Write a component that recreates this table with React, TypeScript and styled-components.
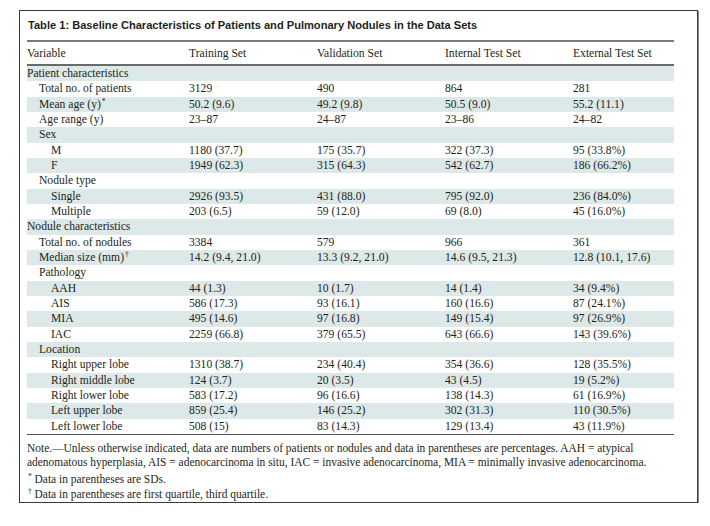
import styled, { createGlobalStyle } from "styled-components";

const GlobalStyle = createGlobalStyle`
  body {
    margin: 0;
    background: #ffffff;
  }
`;

type RowData = {
  label: string;
  sup?: string;
  level: number;
  values?: string[];
};

const rows: RowData[] = [
  { label: "Patient characteristics", level: 0 },
  { label: "Total no. of patients", level: 1, values: ["3129", "490", "864", "281"] },
  { label: "Mean age (y)", sup: "*", level: 1, values: ["50.2 (9.6)", "49.2 (9.8)", "50.5 (9.0)", "55.2 (11.1)"] },
  { label: "Age range (y)", level: 1, values: ["23–87", "24–87", "23–86", "24–82"] },
  { label: "Sex", level: 1 },
  { label: "M", level: 2, values: ["1180 (37.7)", "175 (35.7)", "322 (37.3)", "95 (33.8%)"] },
  { label: "F", level: 2, values: ["1949 (62.3)", "315 (64.3)", "542 (62.7)", "186 (66.2%)"] },
  { label: "Nodule type", level: 1 },
  { label: "Single", level: 2, values: ["2926 (93.5)", "431 (88.0)", "795 (92.0)", "236 (84.0%)"] },
  { label: "Multiple", level: 2, values: ["203 (6.5)", "59 (12.0)", "69 (8.0)", "45 (16.0%)"] },
  { label: "Nodule characteristics", level: 0 },
  { label: "Total no. of nodules", level: 1, values: ["3384", "579", "966", "361"] },
  { label: "Median size (mm)", sup: "†", level: 1, values: ["14.2 (9.4, 21.0)", "13.3 (9.2, 21.0)", "14.6 (9.5, 21.3)", "12.8 (10.1, 17.6)"] },
  { label: "Pathology", level: 1 },
  { label: "AAH", level: 2, values: ["44 (1.3)", "10 (1.7)", "14 (1.4)", "34 (9.4%)"] },
  { label: "AIS", level: 2, values: ["586 (17.3)", "93 (16.1)", "160 (16.6)", "87 (24.1%)"] },
  { label: "MIA", level: 2, values: ["495 (14.6)", "97 (16.8)", "149 (15.4)", "97 (26.9%)"] },
  { label: "IAC", level: 2, values: ["2259 (66.8)", "379 (65.5)", "643 (66.6)", "143 (39.6%)"] },
  { label: "Location", level: 1 },
  { label: "Right upper lobe", level: 2, values: ["1310 (38.7)", "234 (40.4)", "354 (36.6)", "128 (35.5%)"] },
  { label: "Right middle lobe", level: 2, values: ["124 (3.7)", "20 (3.5)", "43 (4.5)", "19 (5.2%)"] },
  { label: "Right lower lobe", level: 2, values: ["583 (17.2)", "96 (16.6)", "138 (14.3)", "61 (16.9%)"] },
  { label: "Left upper lobe", level: 2, values: ["859 (25.4)", "146 (25.2)", "302 (31.3)", "110 (30.5%)"] },
  { label: "Left lower lobe", level: 2, values: ["508 (15)", "83 (14.3)", "129 (13.4)", "43 (11.9%)"] },
];

const headers = ["Variable", "Training Set", "Validation Set", "Internal Test Set", "External Test Set"];

export default function App() {
  return (
    <>
      <GlobalStyle />
      <Card>
        <Title>Table 1: Baseline Characteristics of Patients and Pulmonary Nodules in the Data Sets</Title>
        <Table>
          <HeaderRow>
            {headers.map((h) => (
              <Cell key={h}>{h}</Cell>
            ))}
          </HeaderRow>
          {rows.map((r, i) => (
            <Row key={r.label} $shaded={i % 2 === 0}>
              <LabelCell $level={r.level}>
                {r.label}
                {r.sup && <Sup>{r.sup}</Sup>}
              </LabelCell>
              {(r.values || ["", "", "", ""]).map((v, j) => (
                <Cell key={j}>{v}</Cell>
              ))}
            </Row>
          ))}
        </Table>
        <Notes>
          <NotePara $gap={2}>
            Note.—Unless otherwise indicated, data are numbers of patients or nodules and data in parentheses are percentages. AAH = atypical
            <br />
            adenomatous hyperplasia, AIS = adenocarcinoma in situ, IAC = invasive adenocarcinoma, MIA = minimally invasive adenocarcinoma.
          </NotePara>
          <NotePara $gap={1}>
            <Sup>*</Sup> Data in parentheses are SDs.
          </NotePara>
          <NotePara $gap={0}>
            <Sup>†</Sup> Data in parentheses are first quartile, third quartile.
          </NotePara>
        </Notes>
      </Card>
    </>
  );
}

const Card = styled.div`
  margin: 10px 0 0 19px;
  width: 662px;
  height: 491px;
  border: 1px solid #3a3a3a;
  box-shadow: 1px 1px 0 #8a8a8a;
  padding: 0 8px 0 7px;
  box-sizing: content-box;
  background: #ffffff;
  font-family: "Liberation Serif", "Times New Roman", serif;
  color: #231f20;
  overflow: hidden;
`;

const Title = styled.div`
  font-family: "Liberation Sans", Arial, sans-serif;
  font-weight: bold;
  font-size: 11.1px;
  line-height: 14px;
  padding: 7px 0 8px 1px;
  color: #231f20;
  white-space: nowrap;
`;

const Table = styled.div`
  border-top: 2px solid #7a7a7a;
  border-bottom: 1.5px solid #555555;
  width: 647px;
`;

const HeaderRow = styled.div`
  display: grid;
  grid-template-columns: 162px 128px 128px 128px 1fr;
  height: 22px;
  align-items: center;
  font-size: 11.6px;
  border-bottom: 2px solid #6a6a6a;
`;

const Row = styled.div<{ $shaded: boolean }>`
  display: grid;
  grid-template-columns: 162px 128px 128px 128px 1fr;
  height: 15.33px;
  align-items: center;
  font-size: 11.6px;
  background: ${(p) => (p.$shaded ? "#dde8e8" : "transparent")};
`;

const Cell = styled.div`
  white-space: nowrap;
  line-height: 15px;
`;

const LabelCell = styled.div<{ $level: number }>`
  white-space: nowrap;
  line-height: 15px;
  padding-left: ${(p) => p.$level * 12}px;
`;

const Sup = styled.span`
  font-size: 7.5px;
  line-height: 0;
  vertical-align: 4px;
  margin-left: 1px;
`;

const Notes = styled.div`
  padding-top: 6px;
  font-size: 11.45px;
  line-height: 14.5px;
`;

const NotePara = styled.p<{ $gap: number }>`
  margin: 0 0 ${(p) => p.$gap}px 0;
  white-space: nowrap;
`;
